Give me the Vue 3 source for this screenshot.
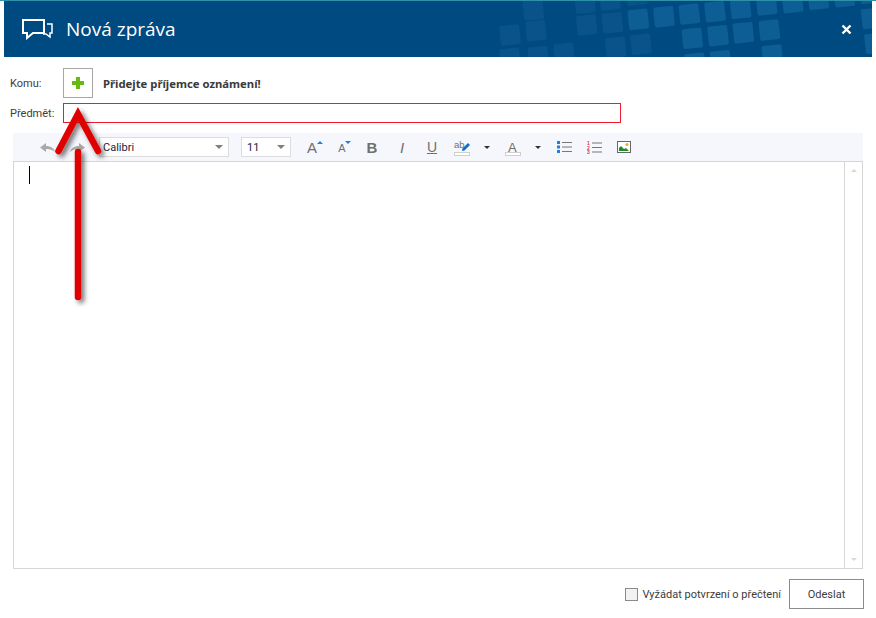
<template>
  <div class="page">
    <div class="topline"></div>
    <header class="head">
      <svg class="pattern" width="868" height="56" viewBox="0 0 868 56">
        <rect v-for="(s, i) in squares" :key="i" :x="s[0]" :y="s[1]" width="20" height="20" rx="2"
          :fill="s[2] ? '#0d5e95' : '#09528a'" :transform="`rotate(-6 ${s[0] + 10} ${s[1] + 10})`" />
      </svg>
      <svg class="head-icon" width="32" height="22" viewBox="0 0 32 22" fill="none" stroke="#fff">
        <path stroke-width="2" d="M1 2h21v13H11l-6 5v-5H1z" />
        <path stroke-width="1.5" d="M25 6h5v9h-2v4l-4-3h-3" />
      </svg>
      <h1 class="title">Nová zpráva</h1>
      <svg class="close" width="11" height="11" viewBox="0 0 11 11">
        <path d="M1.5 1.5l8 8M9.5 1.5l-8 8" stroke="#fff" stroke-width="2.4" />
      </svg>
    </header>

    <div class="form">
      <div class="row row-to">
        <label class="lbl">Komu:</label>
        <button class="add">
          <svg width="12" height="12" viewBox="0 0 12 12"><path d="M4 0h4v4h4v4H8v4H4V8H0V4h4z" fill="#66bb11" /></svg>
        </button>
        <b class="hint">Přidejte příjemce oznámení!</b>
      </div>
      <div class="row row-subject">
        <label class="lbl">Předmět:</label>
        <div class="subject"></div>
      </div>
    </div>

    <div class="editor">
      <div class="toolbar">
        <span class="tool">
          <svg width="15" height="9" viewBox="0 0 15 9"><path d="M0 4.500 6 0v3c5 0 8 2.500 9 6-2-2-5-3-9-3v3z" fill="#a9a9a9" /></svg>
        </span>
        <span class="tool redo">
          <svg width="15" height="9" viewBox="0 0 15 9"><path d="M15 4.500 9 0v3C4 3 1 5.500 0 9c2-2 5-3 9-3v3z" fill="#a9a9a9" /></svg>
        </span>
        <div class="select font-select"><span>Calibri</span><i class="arrow"></i></div>
        <div class="select size-select"><span>11</span><i class="arrow"></i></div>

        <span class="tool first"><span class="glyph big">A</span><i class="tip up"></i></span>
        <span class="tool"><span class="glyph small">A</span><i class="tip down"></i></span>
        <span class="tool"><span class="glyph bold">B</span></span>
        <span class="tool"><span class="glyph italic">I</span></span>
        <span class="tool"><span class="glyph under">U</span></span>
        <span class="tool">
          <span class="marker">
            <span class="ab">ab</span>
            <svg class="pen" width="8" height="8" viewBox="0 0 8 8"><path d="M6 0l2 2-5.500 5.500L0 8l.5-2.500z" fill="#0f6fc6" /></svg>
            <i class="swatch"></i>
          </span>
        </span>
        <span class="tool caret"><i class="drop"></i></span>
        <span class="tool color-tool">
          <span class="marker"><span class="glyph color">A</span><i class="swatch"></i></span>
        </span>
        <span class="tool caret"><i class="drop"></i></span>
        <span class="tool list-first">
          <svg width="15" height="12" viewBox="0 0 15 12">
            <rect v-for="y in [0, 4.500, 9]" :key="y" x="0" :y="y" width="3" height="3" fill="#1e7fe0" />
            <rect v-for="y in [1, 5.500, 10]" :key="y" x="5" :y="y" width="10" height="1" fill="#777" />
          </svg>
        </span>
        <span class="tool">
          <svg width="15" height="13" viewBox="0 0 15 13">
            <text v-for="(y, i) in [4, 8.500, 13]" :key="y" x="0" :y="y" class="num">{{ i + 1 }}</text>
            <rect v-for="y in [1.500, 6, 10.500]" :key="y" x="5" :y="y" width="10" height="1" fill="#777" />
          </svg>
        </span>
        <span class="tool">
          <svg width="14" height="12" viewBox="0 0 14 12">
            <rect x=".5" y=".5" width="13" height="11" fill="#fff" stroke="#666" />
            <path d="M2 10V7l2-2 3 3 2-1 3 3z" fill="#1d8a2e" />
            <circle cx="10" cy="3.500" r="1.500" fill="#f5a623" />
          </svg>
        </span>
      </div>
      <div class="body">
        <div class="text-area"><i class="cursor"></i></div>
        <div class="scroll">
          <i class="scroll-up"></i>
          <i class="scroll-down"></i>
        </div>
      </div>
    </div>

    <footer class="foot">
      <label class="confirm"><i class="check"></i>Vyžádat potvrzení o přečtení</label>
      <button class="send">Odeslat</button>
    </footer>

    <!-- annotation drawn over the screenshot -->
    <svg class="callout" width="876" height="618" viewBox="0 0 876 618">
      <defs>
        <filter id="sh" x="-50%" y="-20%" width="200%" height="140%">
          <feDropShadow dx="3" dy="3" stdDeviation="2.500" flood-color="#000" flood-opacity=".55" />
        </filter>
      </defs>
      <g filter="url(#sh)" fill="none" stroke="#e00000" stroke-width="6.500" stroke-linecap="round">
        <path d="M58.500 151 78 114l20 37" stroke-linejoin="miter" stroke-miterlimit="10" />
        <path d="M78 152v145" />
      </g>
    </svg>
  </div>
</template>

<script setup>
// [x, y, bright] of the tiles in the header background
const raw = [
  [70, 0, 0], [225, -20, 0], [300, -30, 0], [380, -45, 0],
  [230, 45, 0], [307, 38, 0], [385, 28, 1], [462, 20, 1], [538, 12, 1], [615, 5, 1],
  [692, -5, 1], [770, -15, 1], [848, -22, 1], [925, -32, 1], [1003, -40, 1], [1080, -50, 1],
  [1085, 25, 1], [547, 85, 1], [624, 77, 1], [700, 68, 1], [778, 60, 1], [1095, 100, 1],
  [0, 75, 0], [78, 62, 0], [317, 112, 0], [393, 103, 0], [85, 140, 0], [162, 130, 0],
  [0, 145, 0], [555, 160, 1], [632, 152, 1], [787, 135, 1],
];
const squares = raw.map(([x, y, b]) => [x / 3 + 496, y / 3 - 1, b]);
</script>

<style>
html, body { margin: 0; background: #fff; }
</style>

<style scoped>
.page {
  position: relative;
  width: 876px;
  height: 618px;
  overflow: hidden;
  background: #fff;
  font-family: Roboto, sans-serif;
  font-size: 11px;
  color: #3c3c3c;
}
.topline { height: 1px; background: #2e93a8; }
.head {
  position: relative;
  display: flex;
  align-items: center;
  height: 56px;
  margin: 0 4px;
  padding: 0 20px 0 18px;
  background: #004a82;
  color: #fff;
  overflow: hidden;
}
.pattern { position: absolute; left: 0; top: 0; }
.head-icon { position: relative; flex: none; }
.title {
  position: relative;
  flex: 1;
  margin: 0 0 0 12px;
  font: 400 19px "Open Sans", sans-serif;
}
.close { position: relative; }

.form { padding: 11px 0 0 10px; }
.row { display: flex; align-items: center; }
.lbl { width: 53px; flex: none; }
.add {
  display: flex;
  align-items: center;
  justify-content: center;
  width: 30px;
  height: 30px;
  padding: 0;
  border: 1px solid #a6a6a6;
  background: #fff;
}
.hint {
  margin-left: 10px;
  color: #3a3a3a;
  font-family: "Noto Sans", sans-serif;
  font-size: 11.3px;
}
.row-subject { margin-top: 5px; }
.subject {
  width: 558px;
  height: 20px;
  box-sizing: border-box;
  border: 1px solid #ed1c2e;
}

.editor { margin: 10px 13px 0; width: 850px; }
.toolbar {
  display: flex;
  align-items: center;
  height: 28px;
  padding-left: 19px;
  background: #f6f7fd;
}
.tool {
  position: relative;
  display: flex;
  align-items: center;
  justify-content: center;
  flex: none;
  width: 30px;
  height: 28px;
}
.tool.redo { padding-left: 1px; box-sizing: border-box; }
.tool.caret { width: 20px; }
.tool.first { margin-left: 6px; }
.tool.color-tool { margin-left: 1px; }
.tool.list-first { margin-left: 1px; }
.num { font: 700 5px "Liberation Sans", sans-serif; fill: #d9383f; }
.select {
  display: flex;
  align-items: center;
  justify-content: space-between;
  box-sizing: border-box;
  height: 20px;
  padding: 0 5px 0 3px;
  background: #fff;
  border: 1px solid #dcdcdc;
  color: #1c1c3c;
  font-family: Roboto, sans-serif;
  font-size: 11px;
}
.font-select { width: 130px; margin-left: 7px; }
.size-select { width: 50px; margin-left: 12px; padding-left: 5px; }
.arrow {
  border: 4px solid transparent;
  border-top: 4px solid #808080;
  border-bottom: 0;
}
.glyph { font-family: "Liberation Sans", sans-serif; color: #6f6f6f; line-height: 1; }
.glyph.big { font-size: 15px; }
.glyph.small { font-size: 11px; margin-top: 3px; }
.glyph.bold { font-size: 15px; font-weight: 700; }
.glyph.italic { font-size: 15px; font-style: italic; }
.glyph.under { font-size: 14px; text-decoration: underline; }
.glyph.color { position: absolute; left: 3px; top: 0; font-size: 13px; }
.tip { position: absolute; border: 3px solid transparent; }
.tip.up { left: 20px; top: 8px; border-top: 0; border-bottom: 3px solid #1e7fe0; }
.tip.down { left: 18px; top: 8px; border-bottom: 0; border-top: 3px solid #1e7fe0; }
.marker { position: relative; width: 16px; height: 15px; margin-top: 2px; display: block; }
.ab {
  position: absolute;
  left: 0;
  top: -2px;
  font: 9.5px/11px "Liberation Sans", sans-serif;
  color: #6f6f6f;
}
.pen { position: absolute; right: 0; top: 2px; }
.swatch {
  position: absolute;
  left: 0;
  bottom: 0;
  box-sizing: border-box;
  width: 16px;
  height: 4px;
  border: 1px solid #cfcfcf;
  background: #fff;
}
.drop {
  border: 3px solid transparent;
  border-top: 3px solid #333;
  border-bottom: 0;
}
.body {
  display: flex;
  height: 408px;
  box-sizing: border-box;
  border: 1px solid #d6d6d6;
}
.text-area { flex: 1; padding: 4px 15px; }
.cursor { display: block; width: 1px; height: 18px; background: #000; }
.scroll {
  display: flex;
  flex-direction: column;
  justify-content: space-between;
  align-items: center;
  box-sizing: border-box;
  width: 18px;
  padding: 7px 0;
  border-left: 1px solid #d6d6d6;
}
.scroll-up { border: 3px solid transparent; border-top: 0; border-bottom: 3px solid #d8d8d8; }
.scroll-down { border: 3px solid transparent; border-bottom: 0; border-top: 3px solid #d8d8d8; }
.foot {
  display: flex;
  align-items: center;
  justify-content: flex-end;
  padding: 10px 12px 0 0;
}
.confirm { display: flex; align-items: center; margin-right: 8px; }
.check {
  width: 11px;
  height: 11px;
  margin-right: 4px;
  border: 1px solid #8a8a8a;
  background: #f2f2f2;
}
.send {
  width: 75px;
  height: 30px;
  padding: 0;
  border: 1px solid #8c8c8c;
  background: #fff;
  color: #3c3c3c;
  font: 11px Roboto, sans-serif;
}
.callout { position: absolute; left: 0; top: 0; pointer-events: none; }
</style>
